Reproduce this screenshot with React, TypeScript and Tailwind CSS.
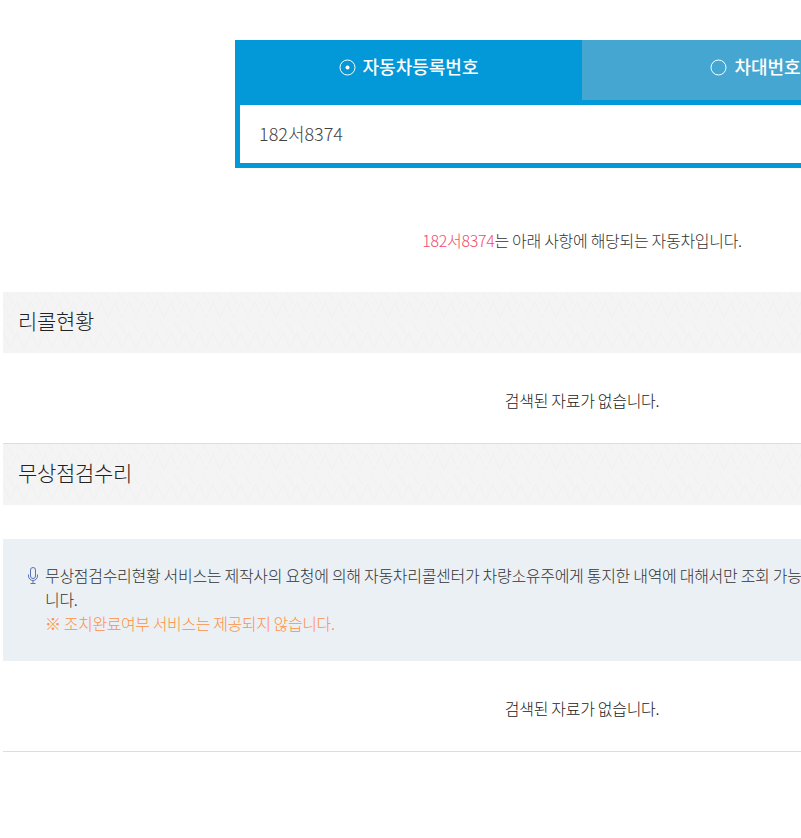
const font = "font-['Noto_Sans_CJK_KR','Noto_Sans',sans-serif]";

function SectionTitle({ id, children }: { id: string; children: string }) {
  return (
    <div className="relative h-[61px] flex items-center pl-[15px] bg-[#f4f4f4] overflow-hidden">
      {/* zigzag texture */}
      <svg className="absolute inset-0 w-full h-full" aria-hidden="true">
        <defs>
          <pattern id={id} width="28" height="30" patternUnits="userSpaceOnUse">
            <path d="M3 0 L10 11 M17 0 L24 11 M0 10 L7 26 L14 10 L21 26 L28 10" fill="none" stroke="#f0f0f0" strokeWidth="1" />
          </pattern>
        </defs>
        <rect width="100%" height="100%" fill={`url(#${id})`} />
      </svg>
      <h3 className="relative text-[21px] leading-[30px] -tracking-[0.3px] text-[#222] font-light pb-[5px]">{children}</h3>
    </div>
  );
}

function Empty() {
  return (
    <p className="text-center text-[16px] leading-6 -tracking-[0.3px] text-[#222] font-light">검색된 자료가 없습니다.</p>
  );
}

export default function App() {
  return (
    <div className={`${font} w-[801px] h-[838px] overflow-hidden bg-white`}>
      <div className="w-[1158px] ml-[3px] pt-10">
        {/* Search box */}
        <div className="w-[694px] mx-auto bg-[#0398d8]">
          <div className="flex h-[60px]">
            <button className="flex-1 flex items-center justify-center gap-[7px] pb-2 text-white text-[18px] font-medium">
              <svg width="17" height="17" viewBox="0 0 17 17" className="mt-[3px]">
                <circle cx="8.5" cy="8.5" r="7.5" fill="none" stroke="white" />
                <circle cx="8.5" cy="8.5" r="2" fill="white" />
              </svg>
              자동차등록번호
            </button>
            <button className="flex-1 flex items-center justify-center gap-[7px] pb-2 text-white text-[18px] font-medium bg-[#45a6d2]">
              <svg width="17" height="17" viewBox="0 0 17 17" className="mt-[3px]">
                <circle cx="8.5" cy="8.5" r="7.5" fill="none" stroke="white" />
              </svg>
              차대번호
            </button>
          </div>
          <div className="p-[5px]">
            <div className="h-[58px] bg-white flex items-center pl-[19px] pb-[2px] text-[18px] text-[#444] font-light">
              182서8374
            </div>
          </div>
        </div>

        <p className="mt-[60px] text-center text-[16px] leading-6 -tracking-[0.3px] text-[#333] font-light">
          <span className="text-[#f24d6c]">182서8374</span>는 아래 사항에 해당되는 자동차입니다.
        </p>

        <div className="mt-[40px]">
          <SectionTitle id="zig1">리콜현황</SectionTitle>
        </div>
        <div className="pt-[35px] pb-[31px] border-b border-[#ddd]">
          <Empty />
        </div>
        <SectionTitle id="zig2">무상점검수리</SectionTitle>

        <div className="mt-[34px] bg-[#ebf0f5] h-[122px] pl-[42px] pt-[24px] pr-[335px]">
          <div className="relative break-all text-[16px] leading-6 -tracking-[0.3px] text-[#333] font-light">
            <svg className="absolute -left-[19px] top-[4px]" width="14" height="17" viewBox="0 0 14 17" fill="none" stroke="#5a72b8" aria-hidden="true">
              <rect x="4.5" y="0.5" width="5" height="11" rx="2.5" />
              <path d="M2.5 7.5v1.5a4.5 4.5 0 0 0 9 0v-1.5M7 13.5v3M4.5 16.5h5" />
            </svg>
            <p>무상점검수리현황 서비스는 제작사의 요청에 의해 자동차리콜센터가 차량소유주에게 통지한 내역에 대해서만 조회 가능합니다.</p>
            <p className="text-[#ff9045] -tracking-[0.4px]">※ 조치완료여부 서비스는 제공되지 않습니다.</p>
          </div>
        </div>

        <div className="pt-[35px] pb-[31px] border-b border-[#ddd]">
          <Empty />
        </div>
      </div>
    </div>
  );
}
